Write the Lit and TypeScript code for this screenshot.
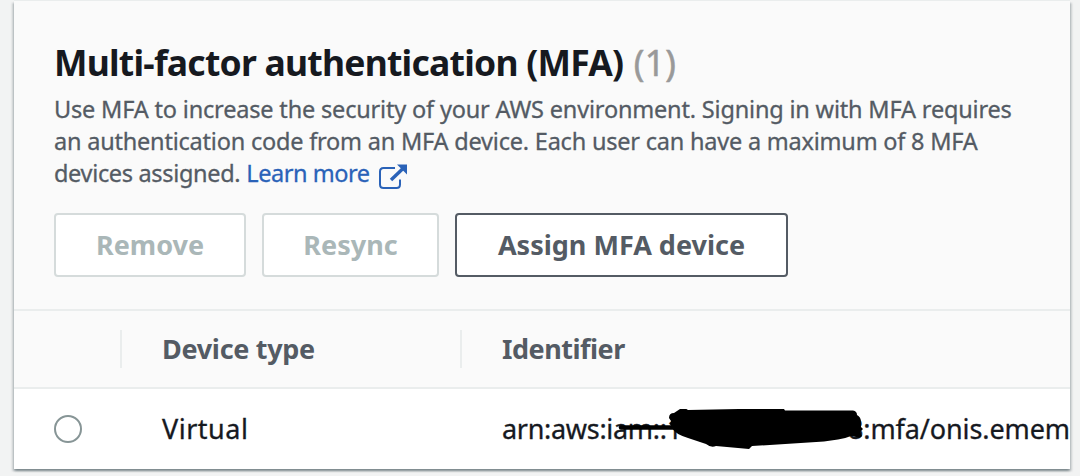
import { LitElement, html, css } from "lit";

class AppRoot extends LitElement {
  static styles = css`
    :host {
      display: block;
      box-sizing: border-box;
      height: 476px;
      padding: 1px 10px 7px 14px;
      overflow: hidden;
      background: #f2f3f3;
      font-family: "Noto Sans", "Open Sans", sans-serif;
      color: #16191f;
    }
    * { box-sizing: border-box; }
    .card {
      height: 468px;
      background: #fff;
      box-shadow:
        0 -1px 0 #eaeded,
        0 2px 2px rgba(0, 28, 36, 0.3),
        2px 2px 2px rgba(0, 28, 36, 0.15),
        -2px 2px 2px rgba(0, 28, 36, 0.15);
    }
    .head {
      height: 310px;
      padding: 39px 40px 0;
      background: #fafafa;
      border-bottom: 2px solid #eaeded;
    }
    h2 {
      margin: 0;
      font-size: 35.5px;
      line-height: 44px;
      font-weight: 700;
      letter-spacing: -0.77px;
      white-space: nowrap;
    }
    .count { margin-left: 2px; font-weight: 400; color: #999; letter-spacing: 0.3px; -webkit-text-stroke: 0.5px #999; }
    .desc {
      margin: 9px 0 24px;
      font-size: 23.5px;
      line-height: 32px;
      color: #545b64;
      white-space: nowrap;
      -webkit-text-stroke: 0.3px currentColor;
    }
    .l1, .l2, .l3 { display: block; height: 32px; }
    .l1 { letter-spacing: -0.18px; }
    .l2 { letter-spacing: -0.21px; }
    .l3 { display: flex; letter-spacing: -0.33px; }
    .link {
      display: flex;
      margin-left: 6px;
      color: #2a62b8;
      letter-spacing: -0.45px;
      text-decoration: none;
    }
    .link svg { margin: 5px 0 0 7px; }
    .actions { display: flex; gap: 16px; }
    button {
      width: 192px;
      height: 64px;
      padding: 0;
      border: 2px solid #d5dbdb;
      border-radius: 4px;
      background: #fff;
      color: #aab7b8;
      font: 700 27px/60px "Noto Sans", sans-serif;
      white-space: nowrap;
    }
    .resync { width: 177px; }
    .assign { width: 333px; border-color: #545b64; color: #545b64; }
    .row {
      display: grid;
      grid-template-columns: 106px 340px 1fr;
      align-items: center;
      font-size: 27px;
      line-height: 40px;
      white-space: nowrap;
    }
    .cols {
      height: 78px;
      background: #fafafa;
      border-bottom: 2px solid #eaeded;
      font-weight: 700;
      color: #545b64;
    }
    .th { height: 38px; padding-left: 40px; line-height: 38px; border-left: 2px solid #eaeded; }
    .type { letter-spacing: -0.3px; }
    .ident { letter-spacing: -0.5px; }
    .data { height: 80px; }
    .radio {
      width: 28px;
      height: 28px;
      margin-left: 40px;
      border: 2px solid #879596;
      border-radius: 50%;
    }
    .virtual { padding-left: 42px; letter-spacing: 0.5px; -webkit-text-stroke: 0.3px currentColor; }
    .arn {
      position: relative;
      display: flex;
      justify-content: space-between;
      min-width: 0;
      padding-left: 42px;
      overflow: hidden;
      -webkit-text-stroke: 0.3px currentColor;
    }
    .a { letter-spacing: -0.3px; }
    .b { letter-spacing: -0.1px; }
    .ink { position: absolute; left: 154px; top: -4px; }
  `;

  render() {
    return html`
      <section class="card">
        <header class="head">
          <h2>Multi-factor authentication (MFA) <span class="count">(1)</span></h2>
          <div class="desc">
            <span class="l1">Use MFA to increase the security of your AWS environment. Signing in with MFA requires</span>
            <span class="l2">an authentication code from an MFA device. Each user can have a maximum of 8 MFA</span>
            <span class="l3">devices assigned.
              <a class="link">Learn more
                <svg width="32" height="28" viewBox="376 162 32 28" fill="none" stroke="#2a62b8" stroke-width="2">
                  <path d="M394 168H382.500Q379 168 379 171.500V184.500Q379 188 382.500 188H395.500Q399 188 399 184.500V179.500" />
                  <path d="M390 180L402 168.500" stroke-width="3.400" />
                  <path d="M396 164.500H406V174.500Z" fill="#2a62b8" stroke="none" />
                </svg>
              </a>
            </span>
          </div>
          <div class="actions">
            <button disabled>Remove</button>
            <button class="resync" disabled>Resync</button>
            <button class="assign">Assign MFA device</button>
          </div>
        </header>
        <div class="row cols">
          <span></span>
          <span class="th type">Device type</span>
          <span class="th ident">Identifier</span>
        </div>
        <div class="row data">
          <span class="radio"></span>
          <span class="virtual">Virtual</span>
          <span class="arn">
            <span class="a">arn:aws:iam::1</span>
            <span class="b">8:mfa/onis.emem</span>
            <svg class="ink" width="250" height="46" viewBox="614 405 250 46">
              <path d="M621 427.500H676" stroke="#000" stroke-width="4.500" stroke-linecap="round" />
              <path d="M670 424L671 421L669 418Q669 413 674 413L680 409Q684 407 688 410L739 409Q743 407.500 750 407.500H783L785 410.500H853Q857 411 857 415Q861 417 861 422V427L863 429L860 432L862 436Q860 439 856 437L851 436Q846 438 838 439.500L824 441.500L752 446L749 449L716 446Q711 448 706 444L688 438Q675 434 672 428Z" />
            </svg>
          </span>
        </div>
      </section>
    `;
  }
}
customElements.define("app-root", AppRoot);
